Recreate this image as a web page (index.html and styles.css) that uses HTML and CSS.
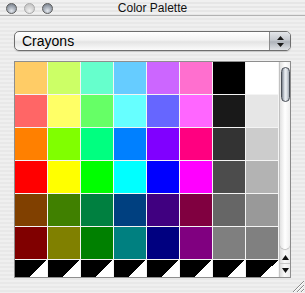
FILE: index.html
```html
<!DOCTYPE html>
<html lang="en">
<head>
    <meta charset="UTF-8">
    <meta name="viewport" content="width=device-width, initial-scale=1.0">
    <title>Color Palette</title>
    <link rel="stylesheet" href="styles.css">
</head>
<body>
    <div class="window">
        <div class="titlebar">
            <div class="lights">
                <span class="light"></span>
                <span class="light off"></span>
                <span class="light"></span>
            </div>
            <div class="title">Color Palette</div>
            <div></div>
        </div>

        <div class="content">
            <div class="popup">
                <span class="popup-label">Crayons</span>
                <span class="popup-arrows">
                    <svg width="7" height="11" viewBox="0 0 7 11">
                        <path d="M3.5 0 L7 4 L0 4 Z M3.5 11 L7 7 L0 7 Z" fill="#1a1a1a"/>
                    </svg>
                </span>
            </div>

            <div class="palette">
                <div class="swatches" id="swatches"></div>
                <div class="scrollbar">
                    <div class="track"><div class="thumb"></div></div>
                    <div class="arrows">
                        <span class="arrow">
                            <svg width="7" height="5" viewBox="0 0 7 5"><path d="M3.5 0 L7 5 L0 5 Z" fill="#111"/></svg>
                        </span>
                        <span class="arrow">
                            <svg width="7" height="5" viewBox="0 0 7 5"><path d="M0 0 L7 0 L3.5 5 Z" fill="#111"/></svg>
                        </span>
                    </div>
                </div>
            </div>
        </div>

        <div class="footer">
            <svg class="grip" width="14" height="11" viewBox="0 0 14 11">
                <path d="M3 11 L14 0 M7 11 L14 4 M11 11 L14 8" stroke="#8a8a8a" stroke-width="1"/>
                <path d="M4 11 L14 1 M8 11 L14 5 M12 11 L14 9" stroke="#ffffff" stroke-width="1"/>
            </svg>
        </div>
    </div>

    <script>
        const crayons = [
            "#ffcc66", "#ccff66", "#66ffcc", "#66ccff", "#cc66ff", "#ff6fcf", "#000000", "#ffffff",
            "#ff6666", "#ffff66", "#66ff66", "#66ffff", "#6666ff", "#ff66ff", "#191919", "#e6e6e6",
            "#ff8000", "#80ff00", "#00ff80", "#0080ff", "#8000ff", "#ff0080", "#333333", "#cccccc",
            "#ff0000", "#ffff00", "#00ff00", "#00ffff", "#0000ff", "#ff00ff", "#4c4c4c", "#b3b3b3",
            "#804000", "#408000", "#008040", "#004080", "#400080", "#800040", "#666666", "#999999",
            "#800000", "#808000", "#008000", "#008080", "#000080", "#800080", "#7f7f7f", "#808080"
        ];

        const swatches = document.getElementById("swatches");
        crayons.forEach(cor => {
            const cell = document.createElement("div");
            cell.className = "swatch";
            cell.style.background = cor;
            swatches.appendChild(cell);
        });
        for (let i = 0; i < 8; i++) {
            const cell = document.createElement("div");
            cell.className = "swatch empty";
            swatches.appendChild(cell);
        }
    </script>
</body>
</html>
```

FILE: styles.css
```css
html, body {
    margin: 0;
    padding: 0;
}
body {
    font-family: 'Liberation Sans', Arial, sans-serif;
    background: repeating-linear-gradient(#efefef 0 2px, #e8e8e8 2px 4px);
    width: 305px;
    height: 293px;
    overflow: hidden;
}
.window {
    width: 305px;
    height: 293px;
    display: flex;
    flex-direction: column;
}
.titlebar {
    height: 15px;
    border-bottom: 1px solid #b2b2b2;
    display: grid;
    grid-template-columns: 1fr auto 1fr;
    align-items: center;
    background: repeating-linear-gradient(#f0f0f0 0 2px, #e6e6e6 2px 4px);
}
.lights {
    display: flex;
    gap: 7px;
    padding-left: 6px;
}
.light {
    width: 11px;
    height: 11px;
    box-sizing: border-box;
    border-radius: 50%;
    border: 1px solid #5c5c5c;
    background: radial-gradient(circle at 50% 75%, #e4e8ee 0, #a9b0ba 45%, #6c7480 100%);
}
.light.off {
    border-color: #a8a8a8;
    background: radial-gradient(circle at 50% 75%, #f2f2f2 0, #d4d4d4 50%, #bdbdbd 100%);
}
.title {
    font-size: 12px;
    color: #111;
    line-height: 15px;
    padding-top: 1px;
}
.content {
    padding: 15px 14px 0 14px;
}
.popup {
    height: 20px;
    box-sizing: border-box;
    border: 1px solid #6e6e6e;
    border-radius: 5px;
    display: flex;
    overflow: hidden;
    background: linear-gradient(#ffffff 0%, #f2f2f2 45%, #e4e4e4 55%, #fbfbfb 100%);
    box-shadow: 0 1px 1px rgba(0, 0, 0, 0.15);
}
.popup-label {
    flex: 1;
    font-size: 14px;
    line-height: 18px;
    padding-left: 7px;
    color: #000;
}
.popup-arrows {
    width: 20px;
    border-left: 1px solid #8a8a8a;
    display: flex;
    align-items: center;
    justify-content: center;
    background: linear-gradient(#e4e6ea 0%, #c5c9cf 45%, #aeb3ba 55%, #dfe2e6 100%);
}
.palette {
    margin-top: 10px;
    height: 217px;
    box-sizing: border-box;
    border: 1px solid #8e8e8e;
    display: flex;
    background: #fff;
}
.swatches {
    width: 264px;
    overflow: hidden;
    display: grid;
    grid-template-columns: repeat(8, 32px);
    grid-auto-rows: 32px;
    gap: 1px;
    background: #f4f4f4;
}
.swatch.empty {
    background: linear-gradient(to bottom right, #000 50%, #fff 50%);
}
.scrollbar {
    width: 11px;
    display: flex;
    flex-direction: column;
    border-left: 1px solid #c6c6c6;
    box-sizing: border-box;
    background: linear-gradient(to right, #dcdcdc, #fafafa 45%, #ececec);
}
.track {
    flex: 1;
    padding-top: 5px;
    display: flex;
    justify-content: center;
    border-bottom-left-radius: 5px;
    border-bottom-right-radius: 5px;
    background: linear-gradient(to right, #e2e2e2, #ffffff 50%, #eeeeee);
    box-shadow: 0 1px 1px rgba(0, 0, 0, 0.25);
}
.thumb {
    width: 9px;
    height: 35px;
    box-sizing: border-box;
    border: 1px solid #4a4f57;
    border-radius: 5px;
    background: linear-gradient(to right, #7e8590, #d6dbe2 35%, #eef1f4 55%, #a6adb7);
}
.arrows {
    height: 26px;
    display: flex;
    flex-direction: column;
    padding-top: 2px;
}
.arrow {
    height: 12px;
    display: flex;
    align-items: center;
    justify-content: center;
}
.arrow + .arrow {
    border-top: 1px solid #c8c8c8;
}
.footer {
    flex: 1;
    display: flex;
    justify-content: flex-end;
    align-items: flex-end;
    padding: 0 1px 1px 0;
}
```
